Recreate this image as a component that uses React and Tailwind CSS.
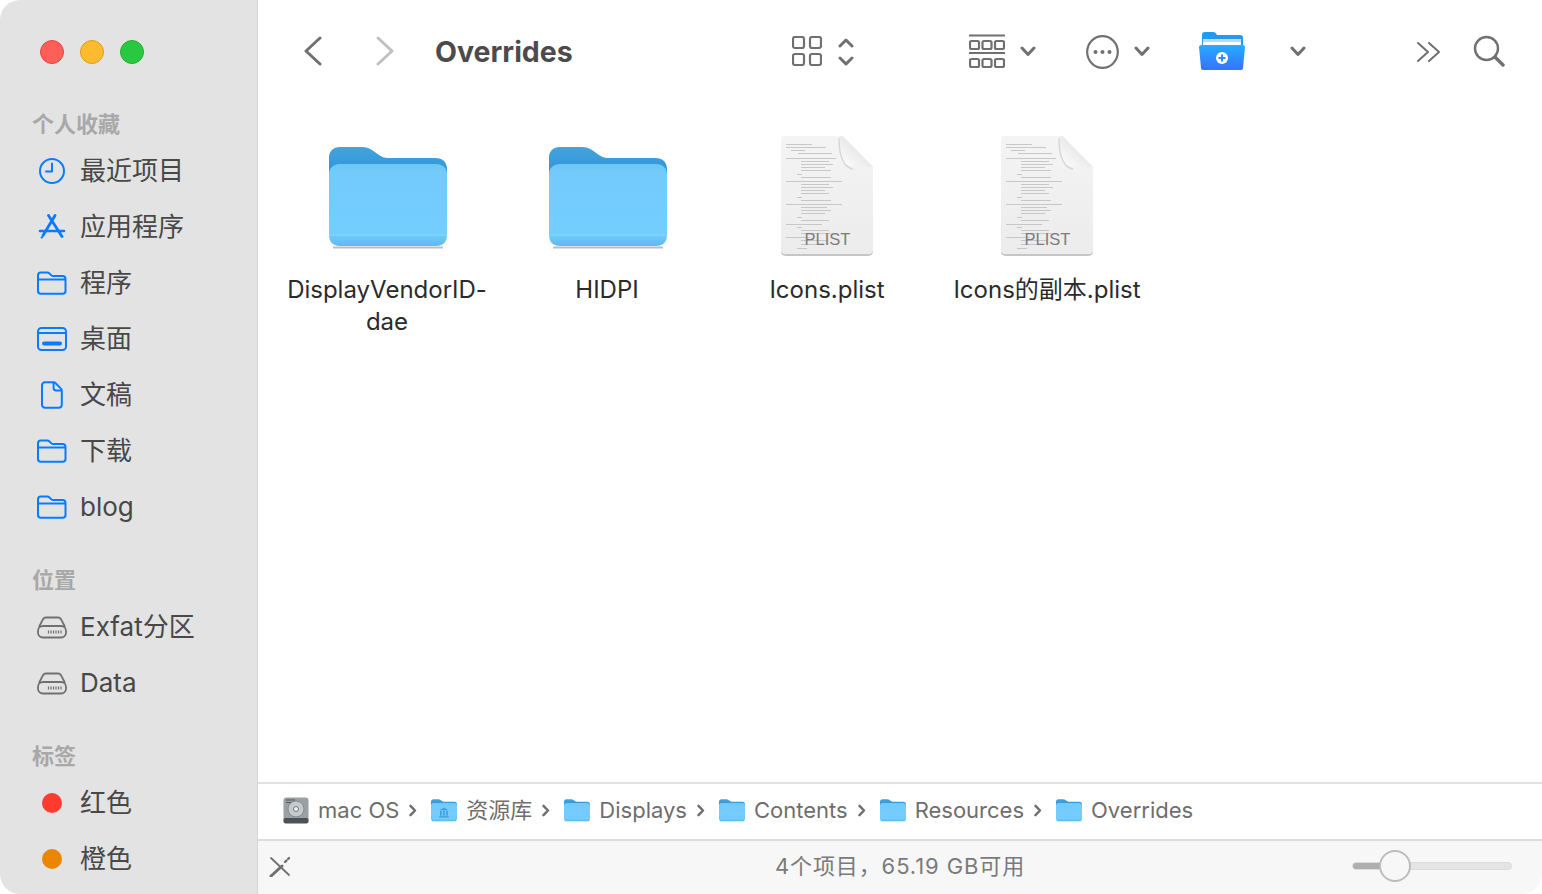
import React from 'react'

const blue = '#0a7aff'
const gray = '#707070'

const SidebarFolder = () => (
  <svg width="30" height="24" viewBox="0 0 30 24" fill="none" stroke={blue} strokeWidth="2" strokeLinejoin="round">
    <path d="M1 20V4.500C1 2.800 2 1.500 3.800 1.500h6.400c1 0 1.600.3 2.300 1l1.600 1.600c.6.600 1.100.9 2 .9H25.500C27.500 5 28.500 6.200 28.500 8V20c0 1.800-1 2.800-2.800 2.800H3.800C2 22.800 1 21.800 1 20z" />
    <path d="M1 8.500h27.500" />
  </svg>
)

const ClockIcon = () => (
  <svg width="26" height="26" viewBox="0 0 26 26" fill="none" stroke={blue} strokeWidth="2" strokeLinecap="round" strokeLinejoin="round">
    <circle cx="13" cy="13" r="12" />
    <path d="M13 5.500V13.500H7" />
  </svg>
)

const AppsIcon = () => (
  <svg width="30" height="26" viewBox="0 0 30 26" fill="none" stroke={blue} strokeWidth="2.800" strokeLinecap="round">
    <path d="M11.500 1.500l13.500 21" />
    <path d="M18 1.500L6 21.500" />
    <path d="M3 17h24" strokeWidth="2.600" />
    <path d="M4.500 23.500h.5" strokeWidth="2" />
  </svg>
)

const DesktopIcon = () => (
  <svg width="30" height="24" viewBox="0 0 30 24" fill="none" stroke={blue} strokeWidth="2" strokeLinejoin="round">
    <rect x="1" y="1" width="28" height="22" rx="3.500" />
    <path d="M1 6h28" />
    <path d="M7 16.500h16" strokeWidth="4" strokeLinecap="round" />
  </svg>
)

const DocIcon = () => (
  <svg width="22" height="28" viewBox="0.800 0 22.200 28" fill="none" stroke={blue} strokeWidth="2" strokeLinejoin="round">
    <path d="M5 1.200h8.500c.9 0 1.500.3 2.100.9l5.300 5.500c.6.600.9 1.200.9 2.100V23.500c0 2-1.200 3.300-3.200 3.300H5c-2 0-3.200-1.300-3.200-3.300V4.500C1.800 2.500 3 1.200 5 1.200z" />
    <path d="M13.500 1.500V7c0 1.500.9 2.500 2.500 2.500h6" />
  </svg>
)

const DriveIcon = () => (
  <svg width="30" height="23" viewBox="0 0 30 23" fill="none" stroke={gray} strokeWidth="1.800" strokeLinejoin="round">
    <path d="M9 1.500h12c1.500 0 2.300.5 3 1.700L28 11" />
    <path d="M9 1.500c-1.500 0-2.300.5-3 1.700L2 11" />
    <rect x="1" y="10" width="28" height="11.500" rx="5" />
    <path d="M11.500 14.500v3M14 14.500v3M16.500 14.500v3M19 14.500v3M21.500 14.500v3M24 14.500v3" strokeWidth="1.200" />
  </svg>
)

const Dot = ({ color }) => <span className={`w-5 h-5 rounded-full ${color}`} />

const Row = ({ icon, label }) => (
  <div className="flex items-center h-14 pl-[37px]">
    <span className="w-[30px] flex items-center justify-center">{icon}</span>
    <span className="ml-[13px] text-[26px] leading-8 text-[#484848]">{label}</span>
  </div>
)

const SectionTitle = ({ children, className = '' }) => (
  <div className={`h-8 mb-[3px] pl-8 text-[22px] leading-8 font-bold text-[#a8a8a8] ${className}`}>{children}</div>
)

const Chevron = ({ className = '' }) => (
  <svg className={className} width="16" height="11" viewBox="0 0 16 11" fill="none" stroke={gray} strokeWidth="3" strokeLinecap="round" strokeLinejoin="round">
    <path d="M2 2l6 6.500L14 2" />
  </svg>
)

// big blue finder folder, scaled down for the path bar
const FolderIcon = ({ width, height, idPrefix, library }) => (
  <svg width={width} height={height} viewBox="0 0 118 102">
    <defs>
      <linearGradient id={`${idPrefix}-back`} x1="0" y1="0" x2="0" y2="1">
        <stop offset="0" stopColor="#45a2dc" />
        <stop offset="1" stopColor="#0f86d8" />
      </linearGradient>
      <linearGradient id={`${idPrefix}-front`} x1="0" y1="0" x2="0" y2="1">
        <stop offset="0" stopColor="#6ec6f6" />
        <stop offset="0.1" stopColor="#72cbfc" />
        <stop offset="0.85" stopColor="#74cdff" />
        <stop offset="1" stopColor="#5fb9ec" />
      </linearGradient>
    </defs>
    <path d="M0 11C0 4 4 0 11 0h22c4 0 7 1 10 3l7 5c3 2 5 3 9 3h47c8 0 12 4 12 12v35H0z" fill={`url(#${idPrefix}-back)`} />
    <path d="M0 28c0-7 4-11 11-11h96c7 0 11 4 11 11v60c0 7-4 11-11 11H11c-7 0-11-4-11-11z" fill={`url(#${idPrefix}-front)`} />
    <path d="M0 88h118" stroke="#8ad6ff" strokeWidth="2" opacity="0.6" />
    <path d="M4 100.500h110" stroke="#9aa5ac" strokeWidth="2" opacity="0.7" />
    {library && (
      <g fill="#3f9cdc">
        <path d="M59 38L38 50h42z" />
        <rect x="41" y="53" width="7" height="22" />
        <rect x="55" y="53" width="7" height="22" />
        <rect x="69" y="53" width="7" height="22" />
        <rect x="37" y="77" width="44" height="6" />
      </g>
    )}
  </svg>
)

// tiny xml lines on the plist preview: [indent, y, width]
const docLines = [
  [6, 8, 26], [6, 11, 40], [11, 14, 14], [18, 17, 34], [6, 22, 50], [21, 25, 28], [21, 28, 32], [21, 31, 24], [21, 34, 30],
  [17, 38, 5], [21, 41, 30], [6, 45, 56], [21, 48, 28], [21, 51, 32], [21, 54, 24], [21, 57, 28],
  [17, 61, 5], [21, 64, 30], [6, 68, 56], [21, 71, 26], [21, 74, 30], [21, 77, 24],
  [17, 81, 5], [21, 84, 28], [6, 88, 36], [17, 91, 5], [21, 94, 28], [21, 97, 30], [6, 101, 24], [21, 104, 26], [21, 108, 22], [17, 112, 10],
]

const PlistIcon = () => (
  <svg width="94" height="120" viewBox="0 0 94 120">
    <defs>
      <linearGradient id="plistPage" x1="0" y1="0" x2="0" y2="1">
        <stop offset="0" stopColor="#f4f4f4" />
        <stop offset="1" stopColor="#ececec" />
      </linearGradient>
      <linearGradient id="plistFold" x1="0" y1="1" x2="1" y2="0">
        <stop offset="0" stopColor="#ffffff" />
        <stop offset="1" stopColor="#d6d6d6" />
      </linearGradient>
    </defs>
    <path d="M1 113c0 3 2 5 5 5h82c3 0 5-2 5-5v2c0 3-2 5-5 5H6c-3 0-5-2-5-5z" fill="#c6c6c6" />
    <path d="M4 0h59l30 31v82c0 3-2 5-5 5H6c-3 0-5-2-5-5V3c0-2 1-3 3-3z" fill="url(#plistPage)" />
    {docLines.map(([x, y, w], i) => (
      <rect key={i} x={x} y={y} width={w} height="0.800" fill="#bdbdbd" />
    ))}
    <path d="M60 0c1 0 3 .5 4 1.500l29 29.500c-4-.5-12-.5-20-.5-8 0-13-5-13-12z" fill="url(#plistFold)" />
    <path d="M59 2c0 16 3 29 14 31" fill="none" stroke="#cfcfcf" strokeWidth="1.500" opacity="0.8" />
    <text x="47.500" y="108.500" textAnchor="middle" fontSize="16.500" fill="#7c7c7c" fontFamily="Liberation Sans, sans-serif">PLIST</text>
  </svg>
)

const DiskIcon = () => (
  <svg width="26" height="27" viewBox="0 0 26 27">
    <rect x="0.500" y="0.500" width="25" height="25" rx="3" fill="#9aa0a4" />
    <rect x="0.500" y="21" width="25" height="5.500" rx="2" fill="#4d5256" />
    <circle cx="13" cy="12" r="8" fill="#c5cacd" stroke="#858b90" />
    <circle cx="13" cy="12" r="2.500" fill="#eef0f1" stroke="#777" />
    <path d="M3 3h9M3 5.500h5" stroke="#54595d" strokeWidth="1.200" />
  </svg>
)

const Crumb = ({ icon, label, last }) => (
  <>
    {icon}
    <span className="ml-[9px] mb-[2px] text-[22px] leading-8 text-[#6e6e6e]">{label}</span>
    {!last && (
      <svg className="ml-[10px] mr-[14px]" width="8" height="13" viewBox="0 0 8 13" fill="none" stroke="#6e6e6e" strokeWidth="2.400" strokeLinecap="round" strokeLinejoin="round">
        <path d="M1.500 1.800l4.500 4.700-4.500 4.700" />
      </svg>
    )}
  </>
)

const FileItem = ({ icon, label }) => (
  <div className="flex flex-col items-center">
    <div className="h-[121px] flex items-start">{icon}</div>
    <div className="mt-[17px] w-[210px] text-center text-[24px] leading-8 text-[#2b2b2b]">{label}</div>
  </div>
)

const BigFolder = ({ id }) => (
  <div className="mt-[11px] ml-[2px]">
    <FolderIcon width={118} height={102} idPrefix={id} />
  </div>
)

export default function App() {
  return (
    <div className="w-[1542px] h-[894px] bg-white overflow-hidden [font-family:Inter,'Noto_Sans_CJK_SC',sans-serif]">
      <div className="flex h-full rounded-[20px] overflow-hidden">
        {/* Sidebar */}
        <aside className="w-[258px] shrink-0 bg-[#e3e3e3] border-r border-[#d6d6d6]">
          <div className="flex gap-4 pt-10 pl-10">
            <span className="w-6 h-6 rounded-full bg-[#ff5f57] border border-[#e5483f]" />
            <span className="w-6 h-6 rounded-full bg-[#febb2e] border border-[#e09e1a]" />
            <span className="w-6 h-6 rounded-full bg-[#28c840] border border-[#1fb032]" />
          </div>
          <SectionTitle className="mt-11">个人收藏</SectionTitle>
          <Row icon={<ClockIcon />} label="最近项目" />
          <Row icon={<AppsIcon />} label="应用程序" />
          <Row icon={<SidebarFolder />} label="程序" />
          <Row icon={<DesktopIcon />} label="桌面" />
          <Row icon={<DocIcon />} label="文稿" />
          <Row icon={<SidebarFolder />} label="下载" />
          <Row icon={<SidebarFolder />} label="blog" />
          <SectionTitle className="mt-[29px]">位置</SectionTitle>
          <Row icon={<DriveIcon />} label="Exfat分区" />
          <Row icon={<DriveIcon />} label="Data" />
          <SectionTitle className="mt-[29px]">标签</SectionTitle>
          <Row icon={<Dot color="bg-[#ff3b30]" />} label="红色" />
          <Row icon={<Dot color="bg-[#ea8600]" />} label="橙色" />
        </aside>

        {/* Main */}
        <main className="flex-1 min-w-0 flex flex-col bg-white">
          {/* Toolbar */}
          <div className="h-[103px] shrink-0 flex items-center pl-[46px]">
            <svg className="-mt-[2px]" width="18" height="30" viewBox="0 0 18 30" fill="none" stroke={gray} strokeWidth="3" strokeLinecap="round" strokeLinejoin="round">
              <path d="M16 2L2 15l14 13" />
            </svg>
            <svg className="ml-[54px] -mt-[2px]" width="18" height="30" viewBox="0 0 18 30" fill="none" stroke="#c0c0c0" strokeWidth="3" strokeLinecap="round" strokeLinejoin="round">
              <path d="M2 2l14 13L2 28" />
            </svg>
            <span className="ml-[41px] w-[357px] text-[28.500px] leading-9 font-bold text-[#4b4b4b]">Overrides</span>
            <svg className="-mt-[2px]" width="30" height="30" viewBox="0 0 30 30" fill="none" stroke={gray} strokeWidth="2.200">
              <rect x="1" y="1" width="11" height="11" rx="2" />
              <rect x="18" y="1" width="11" height="11" rx="2" />
              <rect x="1" y="18" width="11" height="11" rx="2" />
              <rect x="18" y="18" width="11" height="11" rx="2" />
            </svg>
            <svg className="ml-4" width="16" height="30" viewBox="0 0 16 30" fill="none" stroke={gray} strokeWidth="3" strokeLinecap="round" strokeLinejoin="round">
              <path d="M2 9l6-6 6 6M2 21l6 6 6-6" />
            </svg>
            <svg className="ml-[115px] -mt-[2px]" width="36" height="34" viewBox="0 0 36 34" fill="none" stroke={gray} strokeWidth="2.200">
              <path d="M0 1.500h36M0 19h36" />
              <rect x="1" y="7" width="9" height="8" rx="1.500" />
              <rect x="13.500" y="7" width="9" height="8" rx="1.500" />
              <rect x="26" y="7" width="9" height="8" rx="1.500" />
              <rect x="1" y="25" width="9" height="8" rx="1.500" />
              <rect x="13.500" y="25" width="9" height="8" rx="1.500" />
              <rect x="26" y="25" width="9" height="8" rx="1.500" />
            </svg>
            <Chevron className="ml-[15px]" />
            <svg className="ml-[50px]" width="33" height="34" viewBox="0 0 33 34" fill="none">
              <ellipse cx="16.500" cy="17" rx="15.300" ry="15.800" stroke={gray} strokeWidth="2.200" />
              <circle cx="9.500" cy="17" r="2" fill={gray} />
              <circle cx="16.500" cy="17" r="2" fill={gray} />
              <circle cx="23.500" cy="17" r="2" fill={gray} />
            </svg>
            <Chevron className="ml-[15px]" />
            <svg className="ml-[49px] -mt-[1px]" width="46" height="38" viewBox="0 0 46 38">
              <defs>
                <linearGradient id="newFolder" x1="0" y1="0" x2="0" y2="1">
                  <stop offset="0" stopColor="#25adff" />
                  <stop offset="1" stopColor="#3a70ff" />
                </linearGradient>
              </defs>
              <path d="M3 3c0-2 1-3 3-3h8c2 0 3 1 4 3h23c2 0 3 1 3 3v8H3z" fill="#1f9bf5" />
              <rect x="4" y="7" width="38" height="9" fill="#bcdcff" />
              <rect x="4" y="10" width="38" height="6" fill="#ffffff" />
              <path d="M0 15c0-1 1-2 2-2h42c1 0 2 1 2 2l-2 21c0 1-1 2-2 2H4c-1 0-2-1-2-2z" fill="url(#newFolder)" />
              <circle cx="23" cy="26" r="6" fill="#ffffff" />
              <path d="M23 22.500v7M19.500 26h7" stroke="#2c8cff" strokeWidth="2" />
            </svg>
            <Chevron className="ml-[45px]" />
            <svg className="ml-[111px]" width="24" height="20" viewBox="0 0 24 20" fill="none" stroke={gray} strokeWidth="2" strokeLinecap="round" strokeLinejoin="round">
              <path d="M1 1l10 9-10 9M12 1l10 9-10 9" />
            </svg>
            <svg className="ml-[32px] -mt-[2px]" width="32" height="32" viewBox="0 0 32 32" fill="none" stroke={gray} strokeLinecap="round">
              <circle cx="13.500" cy="13.500" r="11.500" strokeWidth="2.400" />
              <path d="M22 22l8 8" strokeWidth="3.400" />
            </svg>
          </div>

          {/* Files */}
          <div className="flex-1 grid grid-cols-[repeat(4,220px)] items-start pl-[19px] pt-[33px]">
            <FileItem icon={<BigFolder id="big1" />} label="DisplayVendorID-dae" />
            <FileItem icon={<BigFolder id="big2" />} label="HIDPI" />
            <FileItem icon={<PlistIcon />} label="Icons.plist" />
            <FileItem icon={<PlistIcon />} label="Icons的副本.plist" />
          </div>

          {/* Path bar */}
          <div className="h-[57px] shrink-0 flex items-center border-t-2 border-[#e2e2e2] pl-[25px] pb-[2px]">
            <Crumb icon={<DiskIcon />} label="mac OS" />
            <Crumb icon={<FolderIcon width={26} height={23} idPrefix="p1" library />} label="资源库" />
            <Crumb icon={<FolderIcon width={26} height={23} idPrefix="p2" />} label="Displays" />
            <Crumb icon={<FolderIcon width={26} height={23} idPrefix="p3" />} label="Contents" />
            <Crumb icon={<FolderIcon width={26} height={23} idPrefix="p4" />} label="Resources" />
            <Crumb icon={<FolderIcon width={26} height={23} idPrefix="p5" />} label="Overrides" last />
          </div>

          {/* Status bar */}
          <div className="h-[55px] shrink-0 grid grid-cols-[1fr_auto_1fr] items-center border-t-2 border-[#dcdcdc] bg-[#f7f7f7] px-[30px] pb-[3px]">
            <svg className="-ml-[19px]" width="22" height="21" viewBox="0 0 22 21" fill="none" stroke={gray} strokeLinecap="round">
              <path d="M2 2l18 17" strokeWidth="1.800" />
              <path d="M13 10L2 20" strokeWidth="3" />
              <path d="M16 6l4-4" strokeWidth="2.400" strokeDasharray="2 2.500" />
            </svg>
            <span className="text-[22px] leading-8 tracking-[0.9px] text-[#7a7a7a]">4个项目，65.19 GB可用</span>
            <div className="relative justify-self-end w-40 h-2 rounded-full bg-[#e4e4e4] border border-[#dcdcdc]">
              <div className="w-[30px] h-full rounded-l-full bg-[#aeaeae]" />
              <span className="absolute left-[26px] top-1/2 -translate-y-1/2 w-8 h-8 rounded-full bg-[#f7f7f7] border-2 border-[#bdbdbd]" />
            </div>
          </div>
        </main>
      </div>
    </div>
  )
}
